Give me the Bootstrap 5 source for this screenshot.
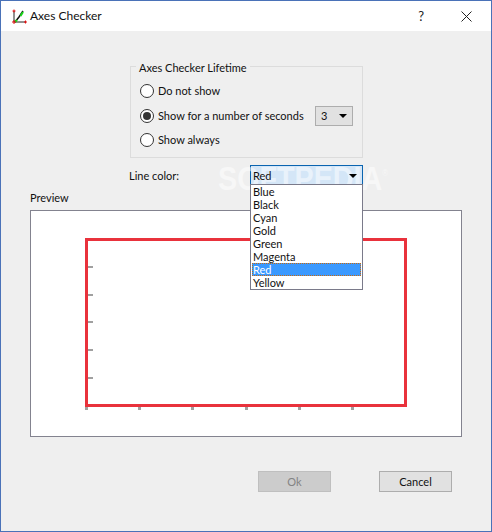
<!DOCTYPE html>
<html lang="en">
<head>
<meta charset="utf-8">
<title>Axes Checker</title>
<link href="https://cdn.jsdelivr.net/npm/bootstrap@5.3.0/dist/css/bootstrap.min.css" rel="stylesheet">
<style>
html,body{margin:0;height:532px;overflow:hidden;background:#efefef}
body{font-family:"Lato","Noto Sans",sans-serif;font-size:11px;color:#111;line-height:14px}
.win{width:492px;height:532px;border:1px solid #4a72b8;background:#efefef;position:relative}
.ttl{height:30px;background:#fff;padding-left:9px}
.ttl-name{font-size:12px;margin-left:3px}
.ttl-q{font-size:13px;margin-right:37px;color:#222}
.ttl-x{margin-right:19px}
.lifebox{width:233px;height:92px;margin:35px 0 0 129px;border:1px solid #dcdcdc;position:relative;padding:12px 0 0 9px;white-space:nowrap}
.lifebox-t{position:absolute;left:5px;top:-6px;background:#efefef;padding:0 3px}
.rrow{height:24.5px}
.rad{width:14px;height:14px;border-radius:50%;border:1px solid #333;background:#fff;margin-right:4px;display:flex;align-items:center;justify-content:center;flex:none}
.rad-on{width:8px;height:8px;border-radius:50%;background:#333}
.mini{width:38px;height:20px;margin-left:auto;margin-right:9px;border:1px solid #adadad;background:#e1e1e1;padding:0 5px}
.caret{width:0;height:0;border-left:4px solid transparent;border-right:4px solid transparent;border-top:4px solid #000}
.colorrow{height:20px;margin:7px 0 0 128px;position:relative}
.colorlab{width:121px;padding-top:1px}
.colorbox{width:113px;height:20px;border:1px solid #0a64b0;background:#d4e6f7;padding:1px 5px 0 2px}
.colorbox span{position:relative;z-index:4}
.colorlist{position:absolute;left:121px;top:19px;width:113px;height:106px;background:#fff;border:1px solid #7a7a8a;padding:0 1px;z-index:3;line-height:14px}
.colorlist div{height:13px;padding-left:1px}
.colorlist .sel{background:#3a99ff;color:#fff;outline:1px dotted #c96a10;outline-offset:-1px}
.prevlab{margin:6px 0 0 29px;height:19px}
.prevbox{width:432px;height:227px;margin-left:29px;background:#fff;border:1px solid #83838f}
.prevbox svg{display:block}
.btnrow{margin:34px 0 0 257px;width:194px}
.kbtn{width:73px;height:21px;padding:0;border-radius:0;font-size:11px;line-height:17px;border:1px solid #adadad;background:#e1e1e1;color:#111}
.kbtn:disabled{background:#ccc;border-color:#bfbfbf;color:#838383;opacity:1}
.mark-soft{position:absolute;left:217px;top:161px;font-family:"Liberation Sans",sans-serif;font-weight:700;font-size:33px;line-height:34px;color:#fff;opacity:.5;z-index:2;pointer-events:none;transform:scaleX(.87);transform-origin:left;white-space:nowrap}
.mark-soft sup{font-size:9px;font-weight:400;top:-1.6em}
</style>
</head>
<body>
<div class="win">
  <div class="ttl d-flex align-items-center">
    <svg width="17" height="17" viewBox="0 0 17 17">
      <path d="M4 3V14H16" fill="none" stroke="#222" stroke-width="1"/>
      <path d="M5 14L9 9L13 3" fill="none" stroke="#111" stroke-width="1.5"/>
      <path d="M5 14L7 12M10.500 8L13 4" fill="none" stroke="#18d818" stroke-width="2"/>
      <path d="M2 14H6M4 12V16M2.500 3H5.500M4 1.500V4.500M14 14H17M15.500 12.500V15.500" stroke="#e01010" stroke-width="1" fill="none"/>
    </svg>
    <span class="ttl-name">Axes Checker</span>
    <span class="ttl-q ms-auto">?</span>
    <svg class="ttl-x" width="11" height="11" viewBox="0 0 11 11"><path d="M.5 .5L10.500 10.500M10.500 .5L.5 10.500" stroke="#222" stroke-width="1" fill="none"/></svg>
  </div>

  <div class="lifebox">
    <span class="lifebox-t">Axes Checker Lifetime</span>
    <div class="rrow d-flex align-items-center"><span class="rad"></span>Do not show</div>
    <div class="rrow d-flex align-items-center"><span class="rad"><span class="rad-on"></span></span>Show for a number of seconds
      <span class="mini d-flex align-items-center justify-content-between"><span>3</span><span class="caret"></span></span></div>
    <div class="rrow d-flex align-items-center"><span class="rad"></span>Show always</div>
  </div>

  <div class="colorrow d-flex align-items-center">
    <span class="colorlab">Line color:</span>
    <span class="colorbox d-flex align-items-center justify-content-between"><span>Red</span><span class="caret"></span></span>
    <div class="colorlist">
      <div>Blue</div><div>Black</div><div>Cyan</div><div>Gold</div><div>Green</div><div>Magenta</div><div class="sel">Red</div><div>Yellow</div>
    </div>
  </div>
  <div class="mark-soft">SOFTPEDIA<sup>®</sup></div>

  <div class="prevlab">Preview</div>
  <div class="prevbox">
    <svg width="430" height="225" viewBox="0 0 430 225">
      <g fill="#a0a0a0">
        <rect x="57" y="55" width="5" height="2"/><rect x="57" y="83" width="5" height="2"/><rect x="57" y="110" width="5" height="2"/><rect x="57" y="138" width="5" height="2"/><rect x="57" y="166" width="5" height="2"/>
        <rect x="54" y="196" width="3" height="3"/><rect x="107" y="196" width="3" height="3"/><rect x="160" y="196" width="3" height="3"/><rect x="214" y="196" width="3" height="3"/><rect x="267" y="196" width="3" height="3"/><rect x="320" y="196" width="3" height="3"/>
      </g>
      <rect x="55.500" y="28.500" width="319" height="166" fill="none" stroke="#e9323c" stroke-width="3"/>
    </svg>
  </div>

  <div class="btnrow d-flex justify-content-between">
    <button type="button" class="btn kbtn" disabled>Ok</button>
    <button type="button" class="btn kbtn">Cancel</button>
  </div>
</div>
<script src="https://cdn.jsdelivr.net/npm/bootstrap@5.3.0/dist/js/bootstrap.bundle.min.js"></script>
</body>
</html>
